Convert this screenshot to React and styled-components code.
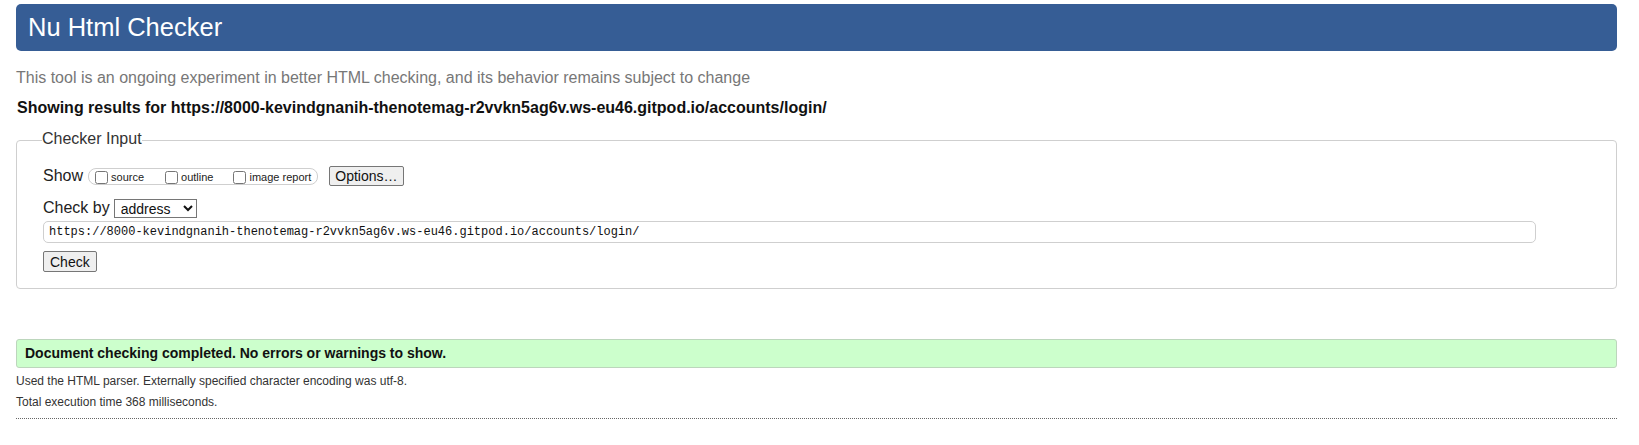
import React from "react";
import styled, { createGlobalStyle } from "styled-components";

const Global = createGlobalStyle`
  html, body { margin: 0; padding: 0; background: #fff; }
  body { font-family: "Liberation Sans", Arial, sans-serif; color: #222; }
`;

const Page = styled.div`
  padding: 4px 22px 0 16px;
`;

const Header = styled.h1`
  margin: 0;
  height: 47px;
  line-height: 47px;
  padding-left: 12px;
  background: #365d95;
  color: #fff;
  font-size: 25.5px;
  font-weight: normal;
  border-radius: 5px;
`;

const Subtitle = styled.p`
  margin: 17px 0 0;
  font-size: 16px;
  line-height: 20px;
  color: #777;
`;

const Showing = styled.p`
  margin: 10px 0 0 1px;
  font-size: 16px;
  line-height: 20px;
  font-weight: bold;
  color: #111;
`;

const Fieldset = styled.fieldset`
  margin: 11px 0 0;
  padding: 14px 26px 16px 26px;
  border: 1px solid #cfcfcf;
  border-radius: 4px;
  min-width: 0;
`;

const Legend = styled.legend`
  padding: 0 0 2px;
  margin-left: -1px;
  font-size: 16px;
  line-height: 20px;
  color: #333;
`;

const Row = styled.div`
  display: flex;
  align-items: center;
  height: ${(p) => p.$h || 22}px;
  margin-top: ${(p) => p.$mt || 0}px;
`;

const Label = styled.span`
  font-size: 16px;
  color: #222;
`;

const Group = styled.span`
  display: inline-flex;
  align-items: center;
  box-sizing: border-box;
  height: 17px;
  margin-left: 5px;
  padding: 0 6px 0 6px;
  border: 1px solid #cfcfcf;
  border-radius: 8px;
`;

const Check = styled.input.attrs({ type: "checkbox" })`
  margin: 0 3px 0 0;
  width: 13px;
  height: 13px;
`;

const CheckLabel = styled.label`
  display: inline-flex;
  align-items: center;
  font-size: 11px;
  color: #222;
  margin-left: ${(p) => p.$ml || 0}px;
  position: relative;
  top: 1px;
`;

const Button = styled.button`
  box-sizing: border-box;
  height: ${(p) => p.$h || 20}px;
  padding: 0 ${(p) => p.$px || 5}px;
  margin-left: ${(p) => p.$ml || 0}px;
  font-family: "Liberation Sans", Arial, sans-serif;
  font-size: 14px;
  color: #111;
  background: #efefef;
  border: 1px solid #767676;
  border-radius: 2px;
`;

const Select = styled.select`
  box-sizing: border-box;
  width: 83px;
  height: 19px;
  margin-left: 4px;
  font-family: "Liberation Sans", Arial, sans-serif;
  font-size: 14px;
  color: #111;
  border: 1px solid #767676;
  border-radius: 0;
  background: #fff;
  padding: 0 0 0 2px;
`;

const UrlInput = styled.input`
  box-sizing: border-box;
  width: calc(100% - 54px);
  height: 22px;
  padding: 0 5px;
  font-family: "Liberation Mono", "DejaVu Sans Mono", monospace;
  font-size: 12px;
  color: #111;
  border: 1px solid #cfcfcf;
  border-radius: 5px;
  outline: none;
`;

const Success = styled.div`
  margin-top: 50px;
  box-sizing: border-box;
  height: 29px;
  line-height: 27px;
  padding-left: 8px;
  background: #ccffcc;
  border: 1px solid #bcd6bc;
  border-radius: 3px;
  font-size: 14px;
  font-weight: bold;
  color: #111;
`;

const Details = styled.div`
  margin-top: 3px;
  font-size: 12px;
  line-height: 21px;
  color: #333;
`;

const Rule = styled.hr`
  margin: 5px 0 0;
  border: 0;
  border-top: 1px dotted #666;
  height: 0;
`;

const URL = "https://8000-kevindgnanih-thenotemag-r2vvkn5ag6v.ws-eu46.gitpod.io/accounts/login/";

export default function App() {
  return (
    <Page>
      <Global />
      <Header>Nu Html Checker</Header>
      <Subtitle>
        This tool is an ongoing experiment in better HTML checking, and its behavior remains subject to change
      </Subtitle>
      <Showing>Showing results for {URL}</Showing>
      <Fieldset>
        <Legend>Checker Input</Legend>
        <Row $h={22}>
          <Label>Show</Label>
          <Group>
            <CheckLabel>
              <Check />source
            </CheckLabel>
            <CheckLabel $ml={21}>
              <Check />outline
            </CheckLabel>
            <CheckLabel $ml={20}>
              <Check />image report
            </CheckLabel>
          </Group>
          <Button $ml={11}>Options…</Button>
        </Row>
        <Row $h={20} $mt={11}>
          <Label>Check by</Label>
          <Select defaultValue="address">
            <option value="address">address</option>
            <option value="file">file upload</option>
            <option value="text">text input</option>
          </Select>
        </Row>
        <Row $h={22} $mt={3}>
          <UrlInput defaultValue={URL} />
        </Row>
        <Row $h={21} $mt={8}>
          <Button $h={21} $px={6}>Check</Button>
        </Row>
      </Fieldset>
      <Success>Document checking completed. No errors or warnings to show.</Success>
      <Details>
        <div>Used the HTML parser. Externally specified character encoding was utf-8.</div>
        <div>Total execution time 368 milliseconds.</div>
      </Details>
      <Rule />
    </Page>
  );
}
